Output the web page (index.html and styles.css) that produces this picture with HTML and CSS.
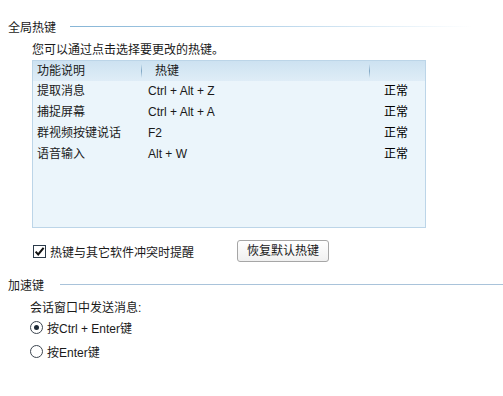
FILE: index.html
```html
<!DOCTYPE html>
<html>
<head>
    <title>热键设置</title>
    <link rel="stylesheet" href="styles.css">
</head>
<body>
    <div class="settings">
        <div class="group-head">
            <span class="group-title">全局热键</span>
            <span class="group-line fade"></span>
        </div>
        <div class="hotkey-panel">
            <p class="hint">您可以通过点击选择要更改的热键。</p>
            <div class="hotkey-table">
                <div class="table-head">
                    <span class="cell col-name">功能说明</span>
                    <span class="cell col-key">热键</span>
                    <span class="cell col-state"></span>
                </div>
                <div class="table-row">
                    <span class="cell col-name">提取消息</span>
                    <span class="cell col-key">Ctrl + Alt + Z</span>
                    <span class="cell col-state">正常</span>
                </div>
                <div class="table-row">
                    <span class="cell col-name">捕捉屏幕</span>
                    <span class="cell col-key">Ctrl + Alt + A</span>
                    <span class="cell col-state">正常</span>
                </div>
                <div class="table-row">
                    <span class="cell col-name">群视频按键说话</span>
                    <span class="cell col-key">F2</span>
                    <span class="cell col-state">正常</span>
                </div>
                <div class="table-row">
                    <span class="cell col-name">语音输入</span>
                    <span class="cell col-key">Alt + W</span>
                    <span class="cell col-state">正常</span>
                </div>
            </div>
            <div class="option-bar">
                <label class="check">
                    <svg class="check-box" width="13" height="13" viewBox="0 0 13 13">
                        <rect x="0.5" y="0.5" width="12" height="12" fill="#fff" stroke="#2b3a4a"/>
                        <path d="M2.6 6.6 L5.2 9.4 L10.6 2.8" fill="none" stroke="#111" stroke-width="2"/>
                    </svg>
                    热键与其它软件冲突时提醒
                </label>
                <button class="reset-btn">恢复默认热键</button>
            </div>
        </div>

        <div class="group-head second">
            <span class="group-title">加速键</span>
            <span class="group-line"></span>
        </div>
        <div class="send-panel">
            <p class="hint">会话窗口中发送消息:</p>
            <label class="radio first">
                <span class="radio-dot checked"></span>按Ctrl + Enter键
            </label>
            <label class="radio">
                <span class="radio-dot"></span>按Enter键
            </label>
        </div>
    </div>
</body>
</html>
```

FILE: styles.css
```css
body {
    margin: 0;
    background: #fff;
    font-family: "Liberation Sans", "Noto Sans CJK SC", sans-serif;
    font-size: 12px;
    color: #1a1a1a;
}
.settings {
    padding: 20px 0 0 8px;
}
.group-head {
    display: flex;
    align-items: center;
    height: 16px;
    line-height: 16px;
}
.group-head.second {
    margin-top: 16px;
}
.group-title {
    width: 62px;
}
.group-head.second .group-title {
    width: 52px;
}
.group-line {
    flex: 1;
    height: 1px;
    margin-bottom: 3px;
    background: #a9c3da;
}
.group-line.fade {
    background: linear-gradient(to right, #86b5d6 0%, #b6d4ea 45%, #e4f0f8 75%, rgba(255,255,255,0) 93%);
}
.hint {
    margin: 0;
    line-height: 16px;
}
.hotkey-panel {
    padding-left: 24px;
    padding-top: 6px;
}
.hotkey-table {
    margin-top: 2px;
    width: 392px;
    height: 166px;
    border: 1px solid #bcd5e8;
    background: #ebf5fb;
}
.table-head,
.table-row {
    display: grid;
    grid-template-columns: 108px 228px 56px;
}
.table-head {
    height: 20px;
    line-height: 20px;
    background: linear-gradient(to bottom, #cde2f1, #dfedf7);
}
.table-row {
    height: 21px;
    line-height: 21px;
}
.cell {
    white-space: nowrap;
}
.col-name {
    padding-left: 4px;
}
.col-key {
    padding-left: 7px;
}
.col-state {
    padding-left: 15px;
    color: #000;
}
.table-head .col-key {
    padding-left: 14px;
}
.table-head .col-key,
.table-head .col-state {
    background: linear-gradient(to bottom, rgba(120,160,190,0) 15%, #7fa6c4 50%, rgba(120,160,190,0) 85%) no-repeat left top / 1px 100%;
}
.option-bar {
    display: flex;
    align-items: center;
    height: 22px;
    margin-top: 12px;
}
.check {
    display: flex;
    align-items: center;
    gap: 4px;
    width: 204px;
    padding-left: 1px;
}
.check-box {
    display: block;
}
.reset-btn {
    width: 92px;
    height: 22px;
    padding: 0;
    border: 1px solid #a6a6a6;
    border-radius: 3px;
    background: linear-gradient(to bottom, #ffffff, #f0f0f0);
    font: inherit;
    color: #1a1a1a;
    line-height: 18px;
}
.send-panel {
    padding-left: 22px;
    padding-top: 6px;
}
.radio {
    display: flex;
    align-items: center;
    gap: 4px;
    height: 16px;
    margin-top: 4px;
}
.radio.first {
    margin-top: 3px;
}
.radio + .radio {
    margin-top: 8px;
}
.radio-dot {
    width: 11px;
    height: 11px;
    border: 1px solid #3d4650;
    border-radius: 50%;
    background: #fff;
    display: flex;
    align-items: center;
    justify-content: center;
}
.radio-dot.checked::after {
    content: "";
    width: 5px;
    height: 5px;
    border-radius: 50%;
    background: #1e2a36;
}
```
